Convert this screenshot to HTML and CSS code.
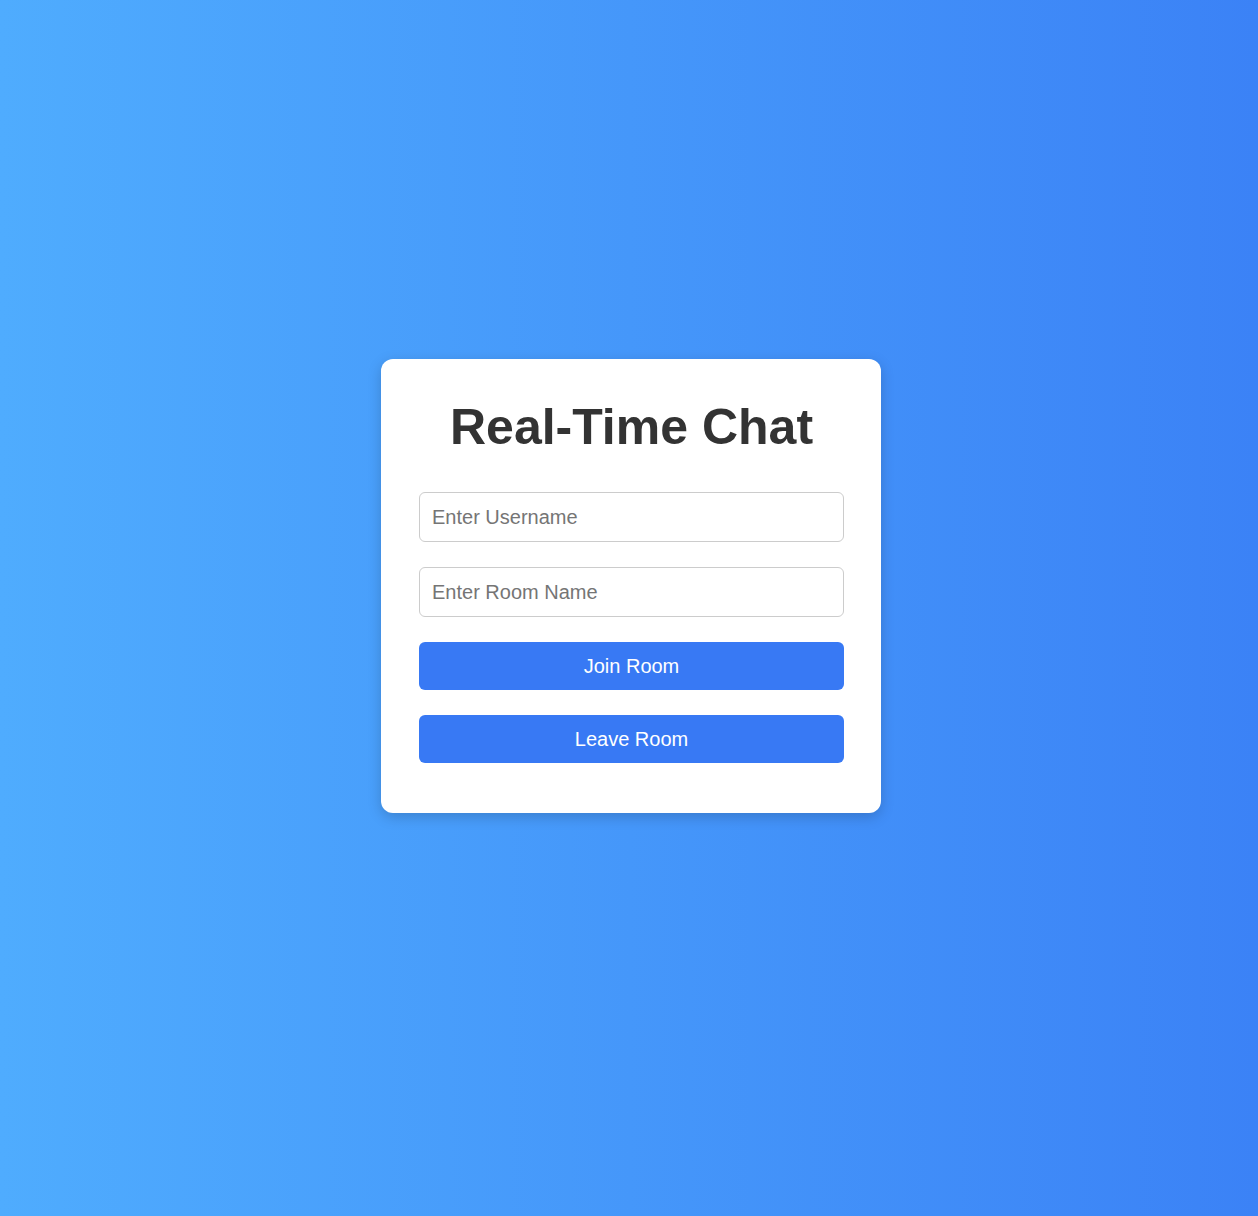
FILE: index.html
```html
<!DOCTYPE html>
<html lang="en">
<head>
<meta charset="utf-8">
<title>Real-Time Chat</title>
<link rel="stylesheet" href="styles.css">
</head>
<body>
<div class="page">
  <div class="card">
    <h1 class="title">Real-Time Chat</h1>
    <div class="form">
      <input class="field" type="text" placeholder="Enter Username">
      <input class="field" type="text" placeholder="Enter Room Name">
      <button class="btn">Join Room</button>
      <button class="btn">Leave Room</button>
    </div>
  </div>
</div>
</body>
</html>
```

FILE: styles.css
```css
html, body {
  margin: 0;
  padding: 0;
}
body {
  font-family: "Liberation Sans", Arial, sans-serif;
  background: linear-gradient(to right, #4facfe, #3b82f6);
  min-height: 100vh;
}
.page {
  min-height: 100vh;
  box-sizing: border-box;
  display: flex;
  align-items: center;
  justify-content: center;
  padding-bottom: 44px;
  padding-left: 4px;
}
.card {
  width: 500px;
  box-sizing: border-box;
  background: #fff;
  border-radius: 12px;
  padding: 40px 37px 50px 38px;
  box-shadow: 0 4px 14px rgba(0, 0, 0, 0.18);
}
.title {
  margin: 0 0 36px;
  font-size: 50px;
  line-height: 57px;
  font-weight: bold;
  color: #333;
  text-align: center;
}
.form {
  display: flex;
  flex-direction: column;
  gap: 25px;
}
.field {
  box-sizing: border-box;
  width: 100%;
  height: 50px;
  padding: 0 12px;
  border: 1px solid #ccc;
  border-radius: 6px;
  font-family: "Liberation Sans", Arial, sans-serif;
  font-size: 20px;
  color: #333;
  outline: none;
}
.field::placeholder {
  color: #757575;
}
.btn {
  box-sizing: border-box;
  width: 100%;
  height: 48px;
  border: none;
  border-radius: 6px;
  background: #3879f4;
  color: #fff;
  font-family: "Liberation Sans", Arial, sans-serif;
  font-size: 20px;
  cursor: pointer;
}
```
